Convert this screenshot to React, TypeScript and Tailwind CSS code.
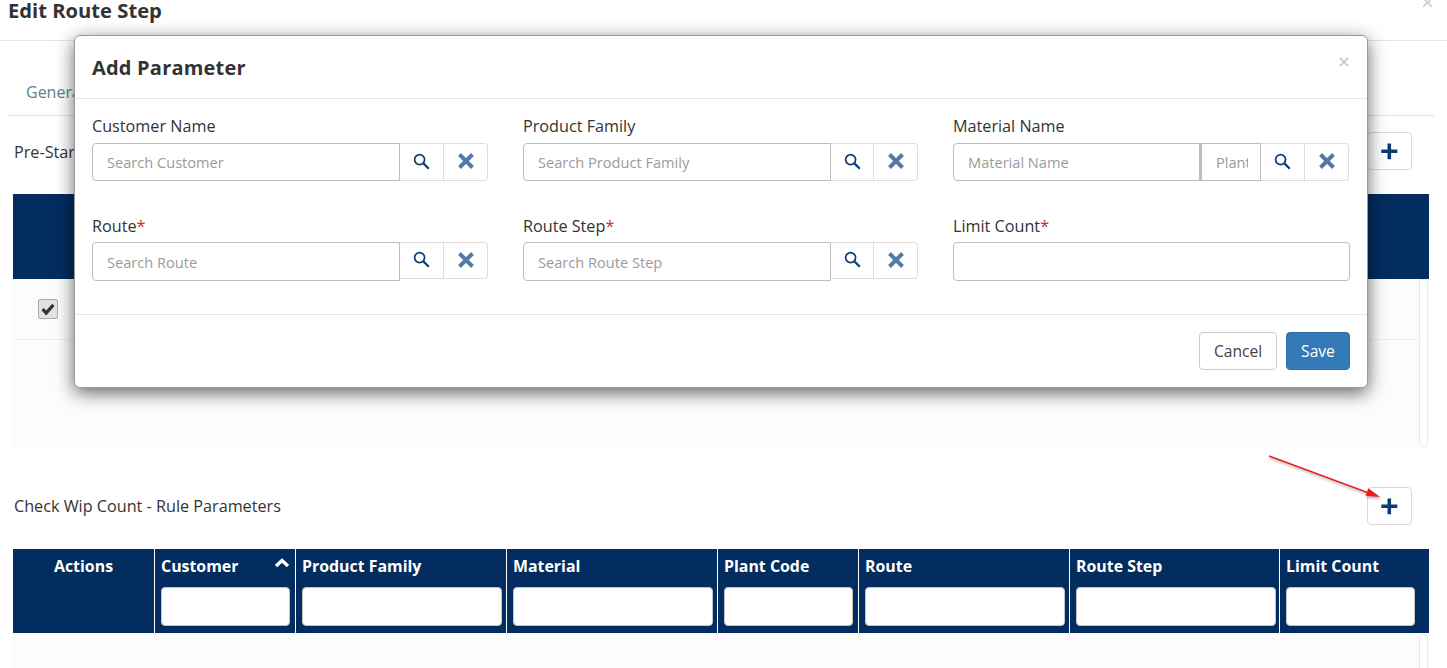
import { Fragment } from "react";

const columns = [
  { name: "Actions", pad: "" },
  { name: "Customer", pad: "border-r border-white pr-[5px]" },
  { name: "Product Family", pad: "border-r border-white pr-[4px]" },
  { name: "Material", pad: "border-r border-white pr-[4px]" },
  { name: "Plant Code", pad: "border-r border-white pr-[5px]" },
  { name: "Route", pad: "border-r border-white pr-[4px]" },
  { name: "Route Step", pad: "border-r border-white pr-[3px]" },
  { name: "Limit Count", pad: "pr-[14px]" },
];

function PlusIcon() {
  return (
    <svg width="17" height="17" viewBox="0 0 17 17" fill="#0b3c74">
      <path d="M6.5 0.5h3.6v6h6.2v3.6h-6.2v6.2h-3.6v-6.2h-6.2v-3.6h6.2z" />
    </svg>
  );
}

function SearchIcon() {
  return (
    <svg width="17" height="17" viewBox="0 0 17 17" fill="none" stroke="#0b3c74" strokeWidth="1.7" className="mb-[2px]">
      <circle cx="6.6" cy="6.6" r="5" />
      <path d="M10.4 10.4l5.4 5.4" strokeWidth="2.2" />
    </svg>
  );
}

function CrossIcon({ size = 16, color = "#4f7ba6", width = 4 }: { size?: number; color?: string; width?: number }) {
  return (
    <svg width={size} height={size} viewBox="0 0 16 16" fill="none" stroke={color} strokeWidth={width}>
      <path d="M1.5 1.5l13 13M14.5 1.5l-13 13" />
    </svg>
  );
}

function AddButton() {
  return (
    <button className="flex h-[38px] w-[45px] items-center justify-center rounded border border-[#d9d9d9] bg-white">
      <PlusIcon />
    </button>
  );
}

function ScrollTrack({ className }: { className: string }) {
  return <div className={`w-[9px] rounded-b border border-[#e9e9e9] bg-white ${className}`} />;
}

function Label({ text, required }: { text: string; required?: boolean }) {
  return (
    <label className="block h-[20px] text-[16.2px] leading-[20px] text-[#333]">
      {text}
      {required && <span className="text-[#c9302c]">*</span>}
    </label>
  );
}

function SearchField({
  label,
  placeholder,
  required,
  plant,
  inputWidth = "w-[308px]",
  searchWidth = "w-[44px]",
}: {
  label: string;
  placeholder: string;
  required?: boolean;
  plant?: boolean;
  inputWidth?: string;
  searchWidth?: string;
}) {
  const inputHeight = required ? "h-[39px]" : "h-[38px]";
  const buttonHeight = required ? "h-[37px]" : "h-[38px]";
  return (
    <div>
      <Label text={label} required={required} />
      <div className={`flex items-start ${required ? "mt-[6px]" : "mt-[7px]"}`}>
        <div
          className={`flex items-center rounded-l border border-[#bdbdbd] bg-white pl-[14px] pt-[2px] text-[14.6px] text-[#9b9b9b] ${inputWidth} ${inputHeight}`}
        >
          {placeholder}
        </div>
        {plant && (
          <div className="flex h-[38px] w-[61px] items-center overflow-hidden border border-l-2 border-[#bdbdbd] pl-[14px] pt-[2px] text-[14.6px] text-[#9b9b9b]">
            <span className="w-[32px] overflow-hidden whitespace-nowrap">Plant</span>
          </div>
        )}
        <div className={`flex items-center justify-center border-y border-r border-[#dddddd] bg-white ${searchWidth} ${buttonHeight}`}>
          <SearchIcon />
        </div>
        <div className={`flex w-[44px] items-center justify-center rounded-r border-y border-r border-[#dddddd] bg-white ${buttonHeight}`}>
          <div className="mb-[2px]">
            <CrossIcon />
          </div>
        </div>
      </div>
    </div>
  );
}

export default function App() {
  return (
    <div
      className="relative h-[668px] w-[1447px] overflow-hidden bg-white text-[#333]"
      style={{ fontFamily: '"Open Sans", "Liberation Sans", sans-serif' }}
    >
      <div className="flex h-[41px] justify-between border-b border-[#e5e5e5] pl-2 pr-[14px]">
        <h1 className="text-[20.2px] leading-[20px] font-bold text-[#333]">Edit Route Step</h1>
        <div className="-mt-[3px] h-[11px]">
          <CrossIcon size={11} color="#cfcfcf" width={2.6} />
        </div>
      </div>

      <div className="mx-2 flex h-[75px] w-[1426px] items-end border-b border-[#e0e0e0] pb-[12px] pl-[18px]">
        <span className="text-[16px] leading-[22px] text-[#5d7f92]">General</span>
      </div>

      <section className="pl-[13px] pr-[18px] pt-4">
        <div className="flex items-center justify-between pr-[17px]">
          <span className="pl-[1px] pt-[2px] text-[16.2px] text-[#333]">Pre-Start</span>
          <AddButton />
        </div>
        <div className="mt-6 h-[85px] w-[1416px] bg-[#022d5e]" />
        <div className="flex h-[168px] w-[1416px] bg-[#fcfcfc] pr-[1px]">
          <div className="h-[61px] flex-1 border-b border-[#efefef] pl-[25px] pt-[20px]">
            <div className="flex h-[20px] w-[20px] items-center justify-center rounded-[2px] border border-[#adadad] bg-[#e2e2e2]">
              <svg width="14" height="13" viewBox="0 0 14 13" fill="#333">
                <path d="M0.5 7.2l2.2-2.2 2.5 2.6L11.2 0.8l2.3 2.2-8.3 9.5z" />
              </svg>
            </div>
          </div>
          <ScrollTrack className="h-full" />
        </div>
      </section>

      <section className="pl-[13px] pr-[18px] pt-10">
        <div className="flex items-center justify-between pr-[17px]">
          <span className="pl-[1px] text-[16.2px] text-[#333]">Check Wip Count - Rule Parameters</span>
          <AddButton />
        </div>
        <div className="mt-6 grid h-[84px] w-[1416px] grid-cols-[142px_141px_211px_211px_141px_211px_210px_149px] bg-[#022d5e]">
          {columns.map((col, i) => (
            <Fragment key={col.name}>
              {i === 0 ? (
                <div className="border-r border-white pt-[6px] text-center text-[15.9px] leading-[22px] font-bold text-white">
                  {col.name}
                </div>
              ) : (
                <div className={`flex flex-col pl-[6px] pt-[6px] ${col.pad}`}>
                  <div className="flex h-[22px] items-center justify-between text-[15.9px] leading-[22px] font-bold text-white">
                    <span>{col.name}</span>
                    {col.name === "Customer" && (
                      <svg width="16" height="10" viewBox="0 0 16 10" fill="none" stroke="#fff" strokeWidth="3.4" className="mb-[6px]">
                        <path d="M2 8l6-5.5L14 8" />
                      </svg>
                    )}
                  </div>
                  <div className="mt-[10px] h-[39px] rounded border border-[#c4c4c4] bg-white" />
                </div>
              )}
            </Fragment>
          ))}
        </div>
        <div className="flex h-[40px] w-[1416px] justify-end bg-[#fcfcfc] pr-[1px] pt-[1px]">
          <ScrollTrack className="h-full rounded-t" />
        </div>
      </section>

      {/* modal on top of the page */}
      <div className="absolute left-[74px] top-[35px] h-[353px] w-[1294px] rounded-md border border-[#999999] bg-white shadow-[0_5px_18px_rgba(0,0,0,0.6)]">
        <div className="flex h-[63px] items-center justify-between border-b border-[#e5e5e5] pl-[17px] pr-[18px]">
          <h2 className="pt-[2px] text-[20px] font-bold tracking-[0.2px] text-[#333]">Add Parameter</h2>
          <div className="-mt-[11px]">
            <CrossIcon size={10} color="#c8c8c8" width={2.6} />
          </div>
        </div>
        <div className="grid h-[216px] grid-cols-[396px_395px_397px] content-start gap-x-[35px] gap-y-[35px] border-b border-[#e5e5e5] pl-[17px] pt-[17px]">
          <SearchField label="Customer Name" placeholder="Search Customer" />
          <SearchField label="Product Family" placeholder="Search Product Family" searchWidth="w-[43px]" />
          <SearchField label="Material Name" placeholder="Material Name" plant inputWidth="w-[247px]" />
          <SearchField label="Route" placeholder="Search Route" required />
          <SearchField label="Route Step" placeholder="Search Route Step" required searchWidth="w-[43px]" />
          <div>
            <Label text="Limit Count" required />
            <div className="mt-[6px] h-[39px] w-[397px] rounded border border-[#bdbdbd] bg-white" />
          </div>
        </div>
        <div className="flex justify-end gap-[9px] pr-[17px] pt-[17px]">
          <button className="h-[38px] w-[78px] rounded border border-[#cccccc] bg-white pt-[2px] text-[15.6px] text-[#444]">
            Cancel
          </button>
          <button className="h-[38px] w-[64px] rounded border border-[#2e6da4] bg-[#337ab7] pt-[2px] text-[15.6px] text-white">
            Save
          </button>
        </div>
      </div>

      {/* red annotation arrow */}
      <svg
        className="absolute left-[1262px] top-[450px] drop-shadow-[1px_2px_1px_rgba(0,0,0,0.3)]"
        width="130"
        height="60"
        viewBox="0 0 130 60"
        fill="none"
      >
        <path d="M7 6L108 43.5" stroke="#ee1c1c" strokeWidth="1.4" />
        <path d="M118 47L103.6 45.8L106.4 38.2z" fill="#ee1c1c" />
      </svg>
    </div>
  );
}
